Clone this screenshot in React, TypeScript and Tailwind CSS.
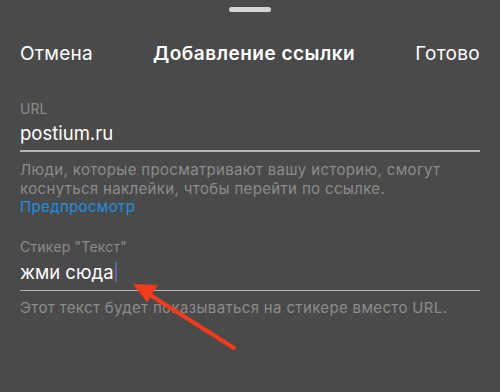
export default function App() {
  return (
    <div
      className="relative w-[500px] h-[392px] overflow-hidden bg-[#4a4a4a] px-5"
      style={{ fontFamily: 'Inter, "Liberation Sans", Arial, sans-serif' }}
    >
      <div className="flex justify-center pt-[7px]">
        <div className="w-[42px] h-[5px] rounded-full bg-[#d4d4d4]" />
      </div>

      <div className="mt-[30px] flex items-center justify-between text-[19px] leading-[24px] text-white">
        <span className="tracking-[0.3px]">Отмена</span>
        <span className="font-semibold tracking-[0.5px]">Добавление ссылки</span>
        <span className="tracking-[0.3px]">Готово</span>
      </div>

      <div className="mt-[35px] text-[14px] leading-[16px] text-[#8a8a8a]">URL</div>
      <div className="mt-[4px] text-[18.5px] leading-[24px] text-white">postium.ru</div>
      <div className="mt-[5px] h-[1.5px] bg-[#b4b4b4]" />
      <p className="mt-[8px] text-[15px] leading-[19px] tracking-[0.35px] text-[#8c8c8c]">
        Люди, которые просматривают вашу историю, смогут
        <br />
        коснуться наклейки, чтобы перейти по ссылке.
      </p>
      <div className="text-[15px] leading-[17px] tracking-[0.35px] text-[#1e90e0]">
        Предпросмотр
      </div>

      <div className="mt-[24px] text-[14px] leading-[16px] tracking-[0.2px] text-[#8a8a8a]">
        Стикер "Текст"
      </div>
      <div className="mt-[5px] flex items-center text-[18.5px] leading-[24px] text-white">
        <span>жми сюда</span>
        <span className="ml-px h-[20px] w-[2px] bg-[#5a6aa0]" />
      </div>
      <div className="mt-[6px] h-[1.5px] bg-[#b4b4b4]" />
      <p className="mt-[7px] text-[15px] leading-[19px] tracking-[0.35px] text-[#8c8c8c]">
        Этот текст будет показываться на стикере вместо URL.
      </p>

      <svg className="absolute left-0 top-0" width="500" height="392" viewBox="0 0 500 392">
        <line x1="234" y1="348" x2="150" y2="295" stroke="#f23a1c" strokeWidth="4" strokeLinecap="round" />
        <polygon points="133,284 158,285 147,302" fill="#f23a1c" />
      </svg>
    </div>
  );
}
